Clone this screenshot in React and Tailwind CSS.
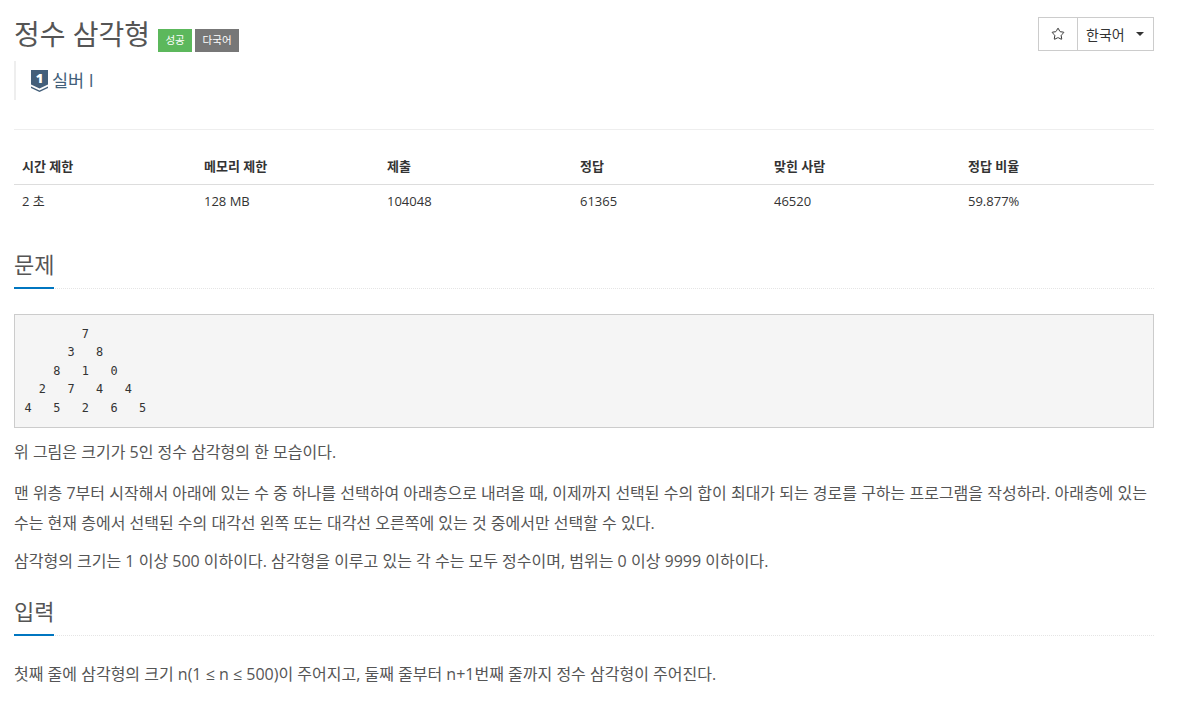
import { Star } from 'lucide-react';

const FONT = "font-['Open_Sans','Noto_Sans_CJK_KR',sans-serif]";

const stats = [
  { head: '시간 제한', value: '2 초', width: 'w-[182px]' },
  { head: '메모리 제한', value: '128 MB', width: 'w-[183px]' },
  { head: '제출', value: '104048', width: 'w-[193px]' },
  { head: '정답', value: '61365', width: 'w-[194px]' },
  { head: '맞힌 사람', value: '46520', width: 'w-[194px]' },
  { head: '정답 비율', value: '59.877%', width: 'w-[194px]' },
];

function SectionHeadline({ children }) {
  return (
    <div className="border-b border-dotted border-[#e5e5e5] h-[41px] relative">
      <h2 className="text-[22px] leading-[30px] pt-[1px] text-[#555]">{children}</h2>
      <div className="absolute left-0 bottom-[-1px] w-[40px] h-[2px] bg-[#0076c0]" />
    </div>
  );
}

function TierIcon() {
  return (
    <svg width="17" height="22" viewBox="0 0 17 22" className="shrink-0">
      <path d="M0 0H17V14.5L8.5 18.5L0 14.5Z" fill="#435f7a" />
      <path d="M0 16.5L8.5 20.5L17 16.5V18L8.5 22L0 18Z" fill="#435f7a" />
      <text x="8.5" y="13" textAnchor="middle" fontSize="13" fontWeight="800" fill="#fff" fontFamily="Open Sans">1</text>
    </svg>
  );
}

export default function App() {
  return (
    <div className={`${FONT} bg-white h-[713px] overflow-hidden ml-[14px] w-[1140px] text-[16px] text-[#555]`}>
      <div className="flex justify-between pt-[17px]">
        <div className="flex items-end h-[34px]">
          <h1 className="text-[28px] leading-[34px] text-[#555]">정수 삼각형</h1>
          <span className="ml-[8px] mb-[-1px] bg-[#5cb85c] text-white text-[10.5px] h-[23px] w-[34px] flex items-center justify-center">성공</span>
          <span className="ml-[3px] mb-[-1px] bg-[#777] text-white text-[10.5px] h-[23px] w-[44px] flex items-center justify-center">다국어</span>
        </div>
        <div className="flex h-[34px] border border-[#ccc] text-[14px] text-[#333]">
          <div className="w-[39px] flex items-center justify-center border-r border-[#ccc]">
            <Star size={14} strokeWidth={1.7} />
          </div>
          <div className="w-[75px] flex items-center pl-[8px] gap-[11px]">
            <span>한국어</span>
            <span className="w-0 h-0 border-t-[4px] border-x-[4px] border-t-[#333] border-x-transparent" />
          </div>
        </div>
      </div>

      <div className="mt-[10px] border-l-[2px] border-[#eee] h-[39px] pl-[15px] flex items-center gap-[4px] text-[#435f7a] text-[17.5px]">
        <TierIcon />
        <span>실버 I</span>
      </div>

      <div className="mt-[29px] border-t border-[#eee]" />

      <table className="mt-[19px] w-[1140px] table-fixed border-collapse">
        <thead>
          <tr className="border-b border-[#ddd]">
            {stats.map((s) => (
              <th key={s.head} className={`${s.width} text-left font-bold text-[13px] text-[#333] px-[8px] h-[35px]`}>{s.head}</th>
            ))}
          </tr>
        </thead>
        <tbody>
          <tr>
            {stats.map((s) => (
              <td key={s.head} className="text-[13px] text-[#333] px-[8px] h-[35px]">{s.value}</td>
            ))}
          </tr>
        </tbody>
      </table>

      <div className="mt-[29px]">
        <SectionHeadline>문제</SectionHeadline>
      </div>

      <pre className="mt-[25px] h-[114px] border border-[#ccc] bg-[#f5f5f5] p-[9.5px] font-['DejaVu_Sans_Mono',monospace] text-[11.9px] leading-[18.57px] text-[#333]">
{`        7
      3   8
    8   1   0
  2   7   4   4
4   5   2   6   5`}
      </pre>

      <p className="mt-[12px] leading-[25px]">위 그림은 크기가 5인 정수 삼각형의 한 모습이다.</p>
      <p className="mt-[13px] leading-[30px]">맨 위층 7부터 시작해서 아래에 있는 수 중 하나를 선택하여 아래층으로 내려올 때, 이제까지 선택된 수의 합이 최대가 되는 경로를 구하는 프로그램을 작성하라. 아래층에 있는 수는 현재 층에서 선택된 수의 대각선 왼쪽 또는 대각선 오른쪽에 있는 것 중에서만 선택할 수 있다.</p>
      <p className="mt-[11px] leading-[25px]">삼각형의 크기는 1 이상 500 이하이다. 삼각형을 이루고 있는 각 수는 모두 정수이며, 범위는 0 이상 9999 이하이다.</p>

      <div className="mt-[21px]">
        <SectionHeadline>입력</SectionHeadline>
      </div>

      <p className="mt-[26px] leading-[25px]">첫째 줄에 삼각형의 크기 n(1 ≤ n ≤ 500)이 주어지고, 둘째 줄부터 n+1번째 줄까지 정수 삼각형이 주어진다.</p>
    </div>
  );
}
